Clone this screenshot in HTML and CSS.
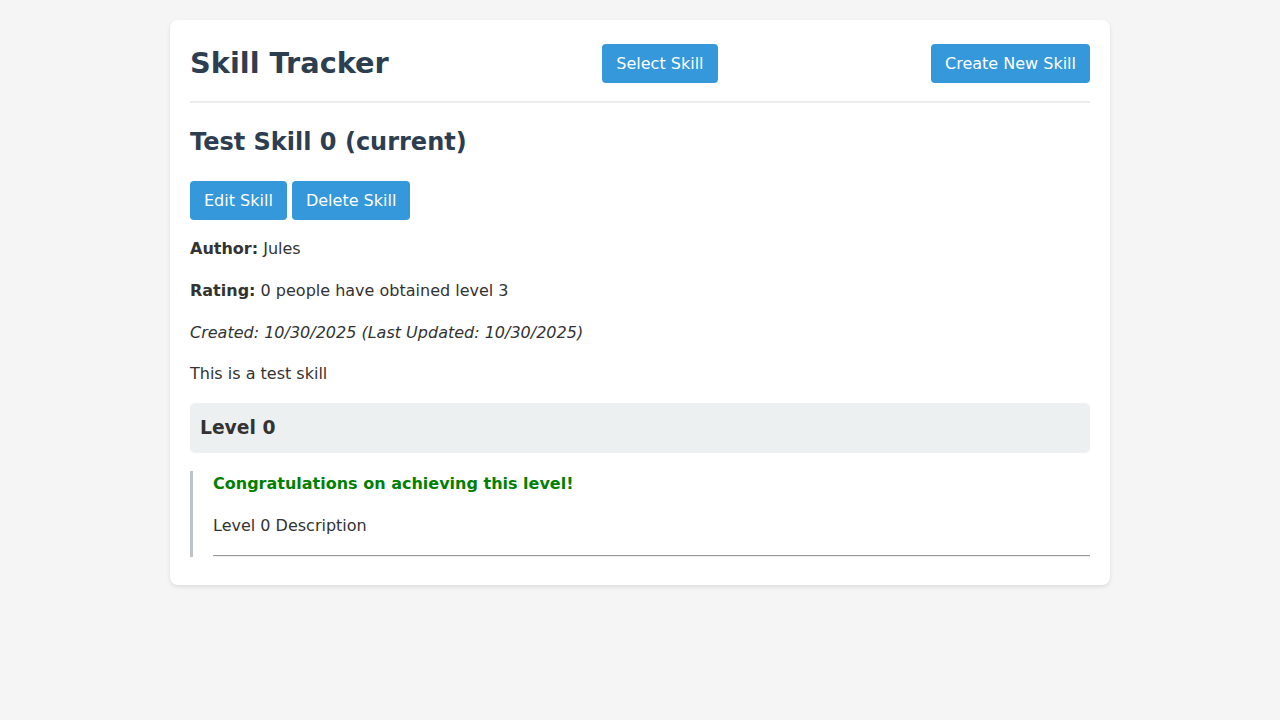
FILE: index.html
```html
<!DOCTYPE html>
<html>
<head>
<meta charset="utf-8">
<link rel="stylesheet" href="styles.css">
</head>
<body>
<div class="container">
  <header class="header">
    <h1 class="title">Skill Tracker</h1>
    <button class="btn">Select Skill</button>
    <button class="btn">Create New Skill</button>
  </header>
  <h2 class="skill-title">Test Skill 0 (current)</h2>
  <div class="actions"><button class="btn">Edit Skill</button> <button class="btn">Delete Skill</button></div>
  <p class="line"><strong>Author:</strong> Jules</p>
  <p class="line"><strong>Rating:</strong> 0 people have obtained level 3</p>
  <p class="line"><em>Created: 10/30/2025 (Last Updated: 10/30/2025)</em></p>
  <p class="line">This is a test skill</p>
  <div class="level-head"><h3 class="level-title">Level 0</h3></div>
  <div class="level-body">
    <p class="congrats">Congratulations on achieving this level!</p>
    <p class="line">Level 0 Description</p>
    <hr class="rule">
  </div>
</div>
</body>
</html>
```

FILE: styles.css
```css
body {
  margin: 0;
  background: #f4f5f4;
  font-family: "DejaVu Sans", sans-serif;
  color: #333;
  line-height: 1.6;
}
.container {
  width: 900px;
  margin: 20px auto;
  background: #fff;
  padding: 20px;
  border-radius: 8px;
  box-shadow: 0 2px 4px rgba(0,0,0,0.1);
}
.header {
  display: flex;
  justify-content: space-between;
  align-items: center;
  height: 47px;
  padding-bottom: 14px;
  border-bottom: 2px solid #eee;
}
.title {
  margin: 0;
  font-size: 28.8px;
  color: #2c3e50;
  line-height: 1.2;
}
.btn {
  font-family: "DejaVu Sans", sans-serif;
  font-size: 16px;
  line-height: 19px;
  background: #3498db;
  color: #fff;
  border: none;
  border-radius: 4px;
  padding: 10px 14px;
  margin: 0;
}
.skill-title {
  margin: 20px 0;
  font-size: 24px;
  color: #2c3e50;
}
.actions {
  line-height: 1;
}
.line {
  margin: 16px 0;
}
.level-head {
  background: #ecf0f1;
  border-radius: 5px;
  padding: 10px;
}
.level-title {
  margin: 0;
  font-size: 18.72px;
}
.level-body {
  border-left: 3px solid #bdc3c7;
  padding-left: 20px;
  margin-top: 18px;
}
.congrats {
  margin: 0 0 17px;
  color: green;
  font-weight: bold;
}
.rule {
  margin: 8px 0;
  border: 0;
  border-top: 1px solid #999;
  border-bottom: 1px solid #eee;
}
```
